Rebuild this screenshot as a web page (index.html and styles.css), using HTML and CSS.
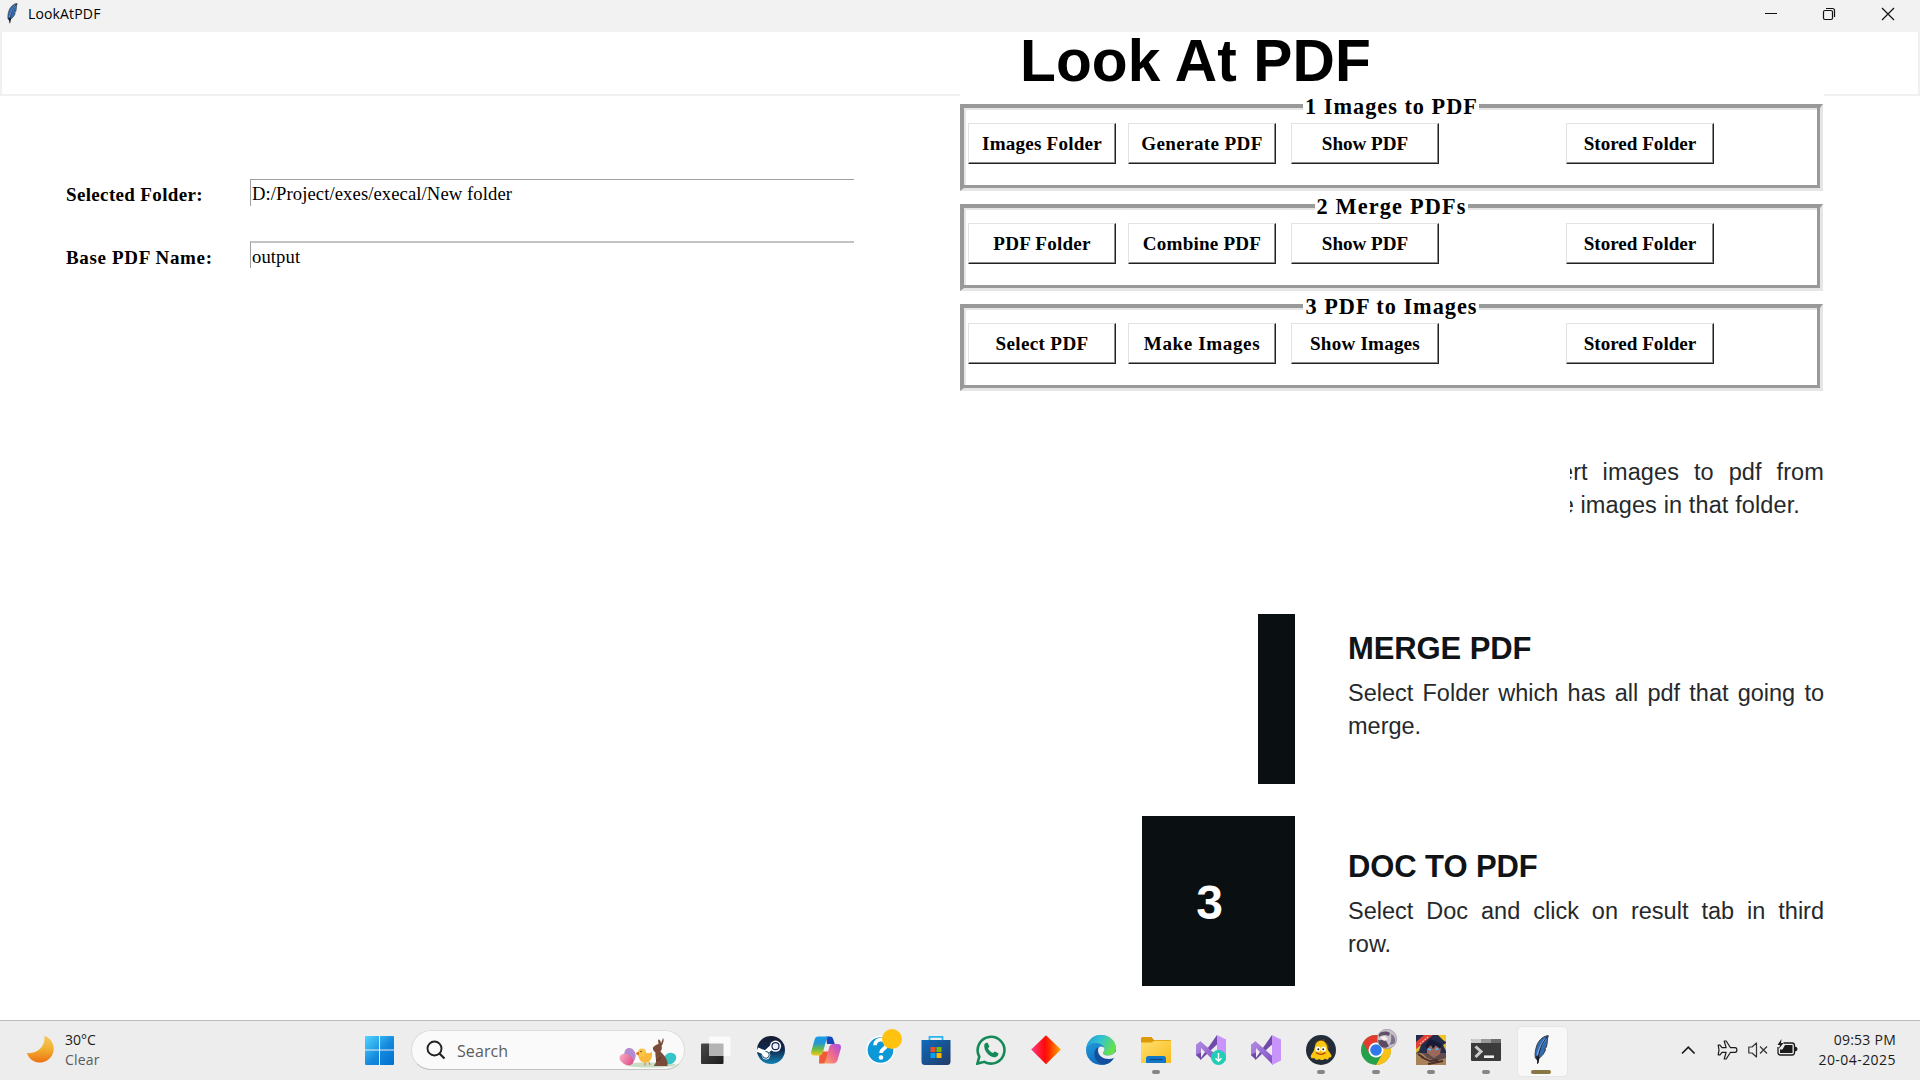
FILE: index.html
```html
<!DOCTYPE html>
<html lang="en">
<head>
<meta charset="utf-8">
<title>LookAtPDF</title>
<link rel="stylesheet" href="styles.css">
</head>
<body>
<svg width="0" height="0" class="defs" aria-hidden="true">
  <defs>
    <linearGradient id="gMoon" x1="0" y1="0" x2="0" y2="1"><stop offset="0" stop-color="#f8c860"/><stop offset=".5" stop-color="#f0b030"/><stop offset="1" stop-color="#ee7014"/></linearGradient>
    <linearGradient id="gWin" x1="0" y1="0" x2="1" y2="1"><stop offset="0" stop-color="#4fd6ff"/><stop offset=".55" stop-color="#1488dd"/><stop offset="1" stop-color="#0070d0"/></linearGradient>
    <linearGradient id="gSteam" x1="0" y1="0" x2="0" y2="1"><stop offset="0" stop-color="#171a2e"/><stop offset=".5" stop-color="#102a50"/><stop offset="1" stop-color="#1483b4"/></linearGradient>
    <linearGradient id="gCopA" x1="0" y1="0" x2="0" y2="1"><stop offset="0" stop-color="#1a9be8"/><stop offset=".35" stop-color="#2398d4"/><stop offset=".65" stop-color="#67bb48"/><stop offset="1" stop-color="#f0c818"/></linearGradient>
    <linearGradient id="gCopB" x1="1" y1="0" x2="0" y2="1"><stop offset="0" stop-color="#a44de8"/><stop offset=".5" stop-color="#ee6890"/><stop offset="1" stop-color="#ffa95c"/></linearGradient>
    <linearGradient id="gStore" x1="0" y1="0" x2="1" y2="1"><stop offset="0" stop-color="#0f6cbd"/><stop offset="1" stop-color="#233a66"/></linearGradient>
    <linearGradient id="gDia" x1="0" y1="0" x2="1" y2="0"><stop offset="0" stop-color="#ff3a86"/><stop offset=".45" stop-color="#ff0a0a"/><stop offset=".6" stop-color="#ff2a00"/><stop offset="1" stop-color="#ffa800"/></linearGradient>
    <linearGradient id="gEdgeA" x1="0" y1="0" x2="1" y2=".4"><stop offset="0" stop-color="#1a98dc"/><stop offset=".5" stop-color="#35c3d0"/><stop offset="1" stop-color="#66e04c"/></linearGradient>
    <linearGradient id="gEdgeB" x1="0" y1="0" x2=".6" y2="1"><stop offset="0" stop-color="#28a8e4"/><stop offset="1" stop-color="#0c62b8"/></linearGradient>
    <linearGradient id="gFold" x1="0" y1="0" x2="1" y2="1"><stop offset="0" stop-color="#ffdf70"/><stop offset="1" stop-color="#f9bc1c"/></linearGradient>
    <linearGradient id="gTask" x1="0" y1="0" x2="1" y2="1"><stop offset="0" stop-color="#4a4a4a"/><stop offset="1" stop-color="#1c1c1c"/></linearGradient>
    <linearGradient id="gVs" x1="0" y1="0" x2="1" y2="1"><stop offset="0" stop-color="#b58be6"/><stop offset="1" stop-color="#7a4fc0"/></linearGradient>
    <linearGradient id="gEgg" x1="0" y1="0" x2="0" y2="1"><stop offset="0" stop-color="#f7a9c4"/><stop offset="1" stop-color="#df4f88"/></linearGradient>
    <symbol id="feather" viewBox="0 0 16 30">
      <path d="M15.3.6C11 .8 6.200 4.500 4 10 2.300 14.500 1.700 19 2.300 23l1.600 1.500C8 22.500 11.500 18.500 12.600 14.500l-1.200-.1 1.900-2.200C14.700 8.500 14 4 15.300.6z" fill="#2f6cb4" stroke="#33363c" stroke-width=".9"/>
      <path d="M13 3.500C9 8 6.300 13 4.500 20" stroke="#79a5d8" stroke-width="2" fill="none"/>
      <path d="M14.500 1.500C9 8 5.500 15 4.500 29" stroke="#15171b" stroke-width=".9" fill="none"/>
      <path d="M2.800 21l2 7h.8l.9-6z" fill="#15171b"/>
    </symbol>
    <symbol id="vs" viewBox="0 0 30 30">
      <path d="M0 10l4.500-3.500v17L0 20z" fill="#5b3a8e"/>
      <path d="M4.500 23.500L21 0v9.500L4.500 25z" fill="#6f4aa8"/>
      <path d="M0 10l4.500-3.700L22 21.500V30L5 13 4 18.500 0 20z" fill="url(#gVs)"/>
      <path d="M0 20l5-2.500v7.500z" fill="#6f4aa8"/>
      <path d="M21 0l9 4.500v21L21 30z" fill="#c893fa"/>
    </symbol>
  </defs>
</svg>

<header class="titlebar">
  <svg class="app-icon" width="12" height="21"><use href="#feather"/></svg>
  <span class="app-name">LookAtPDF</span>
  <div class="controls">
    <svg width="14" height="14" viewBox="0 0 14 14"><path d="M2 6.500h12" stroke="#111"/></svg>
    <svg width="14" height="14" viewBox="0 0 14 14"><rect x="1.500" y="3.500" width="9" height="9" rx="1.500" fill="none" stroke="#111" stroke-width="1.200"/><path d="M4 1.500h6.500a2 2 0 0 1 2 2V10" fill="none" stroke="#111" stroke-width="1.200"/></svg>
    <svg width="14" height="14" viewBox="0 0 14 14"><path d="M1 1l12 12M13 1L1 13" stroke="#111" stroke-width="1.200"/></svg>
  </div>
</header>

<div class="banner"><h1>Look At PDF</h1></div>

<main class="workspace">
  <section class="form">
    <div class="field"><label>Selected Folder:</label><div class="entry">D:/Project/exes/execal/New folder</div></div>
    <div class="field"><label class="wide">Base PDF Name:</label><div class="entry soft">output</div></div>
  </section>

  <section class="panel">
    <div class="group">
      <div class="legend"><span>1 Images to PDF</span></div>
      <button>Images Folder</button><button class="wide">Generate PDF</button><button class="tight">Show PDF</button><button class="tight">Stored Folder</button>
    </div>
    <div class="group">
      <div class="legend"><span class="wide">2 Merge PDFs</span></div>
      <button>PDF Folder</button><button>Combine PDF</button><button class="tight">Show PDF</button><button class="tight">Stored Folder</button>
    </div>
    <div class="group">
      <div class="legend"><span>3 PDF to Images</span></div>
      <button class="wide">Select PDF</button><button class="wider">Make Images</button><button>Show Images</button><button class="tight">Stored Folder</button>
    </div>

    <div class="clip">
      <p class="spread">ert images to pdf from</p>
      <p class="short">e images in that folder.</p>
    </div>
    <div class="step">
      <div class="marker half"></div>
      <div class="copy">
        <h2>MERGE PDF</h2>
        <p class="full">Select Folder which has all pdf that going to</p>
        <p>merge.</p>
      </div>
    </div>
    <div class="step last">
      <div class="marker">3</div>
      <div class="copy">
        <h2>DOC TO PDF</h2>
        <p class="full">Select Doc and click on result tab in third</p>
        <p>row.</p>
      </div>
    </div>
  </section>
</main>

<footer class="taskbar">
  <div class="weather">
    <svg width="30" height="30" viewBox="0 0 30 30"><path d="M19 1.200A14.300 14.300 0 1 1 .8 19.200C12 20.500 20.500 12 19 1.200z" fill="url(#gMoon)"/></svg>
    <div><div class="temp">30°C</div><div class="sky">Clear</div></div>
  </div>
  <div class="cell"><svg width="29" height="30" viewBox="0 0 29 30"><path d="M1 1h13v13.500H0V2a1 1 0 0 1 1-1zM15 1h13a1 1 0 0 1 1 1v12.500H15zM0 15.500h14V30H1a1 1 0 0 1-1-1zM15 15.500h14V29a1 1 0 0 1-1 1H15z" fill="url(#gWin)"/></svg></div>

  <div class="search">
    <svg class="lens" width="20" height="20" viewBox="0 0 20 20"><circle cx="8.500" cy="8.500" r="7" fill="none" stroke="#222" stroke-width="1.900"/><path d="M13.500 13.500l5 5" stroke="#222" stroke-width="2.200"/></svg>
    <span>Search</span>
    <svg class="bunny" width="60" height="30" viewBox="0 0 60 30">
      <ellipse cx="33" cy="27" rx="25" ry="2.600" fill="#c9dcc6"/>
      <ellipse cx="12" cy="17" rx="5.600" ry="7.200" fill="#b48ad0" transform="rotate(-15 12 17)"/>
      <ellipse cx="8.500" cy="21.500" rx="5.200" ry="7.400" fill="url(#gEgg)" transform="rotate(-62 8.500 21.500)"/>
      <ellipse cx="52" cy="20.500" rx="5.500" ry="6.500" fill="#35c4c8" transform="rotate(55 52 20.500)"/>
      <path d="M20 16c2-4 6-5 8-1.500 2.500 1.500 4.500 0 5.800-.5 1 5-.8 9.500-5 10.500-5 .8-8-2-8.800-8.500z" fill="#f9b93c"/>
      <circle cx="24" cy="14.500" r="4" fill="#fbc548"/><path d="M20.500 14l-2.500 1.500 2.500 1.500zM27 24.500v3M31 24l1 3" stroke="#e07b1c" fill="#e07b1c"/><circle cx="23" cy="13.500" r=".7" fill="#333"/>
      <path d="M35 9.500c1.500-2 3.500-3 5.500-3.500L40 1.500c2 0 3 2 3 4L45 0c1.500 2 0 6-1.500 8 1 2 0 4-1 5.500C46 17 50.500 22 49.500 28H36c.5-2 2-2 2-5 0-4-1-6-.5-8.500C37 13.500 34.500 13 35 9.500z" fill="#7a4b39"/>
      <path d="M38 22c2 1 4 0 4.500-3" stroke="#553024" fill="none"/>
    </svg>
  </div>

  <div class="apps">
    <div class="cell"><svg width="30" height="30" viewBox="0 0 30 30"><rect x="0" y="8.500" width="22.500" height="20.500" rx="1" fill="url(#gTask)"/><rect x="8" y="1.500" width="21.500" height="19.500" rx="1" fill="#fafafa"/><path d="M8 8.500h14.500V21H8z" fill="#b4b4b4"/></svg></div>
    <div class="cell"><svg width="30" height="30" viewBox="0 0 30 30"><circle cx="15" cy="15" r="14" fill="url(#gSteam)"/><path d="M1.300 14.500l8 3.400 6-5.500" stroke="#fff" stroke-width="4.500" fill="none"/><circle cx="19.500" cy="11.200" r="5.600" fill="#fff"/><circle cx="19.500" cy="11.200" r="3.500" fill="#eef" stroke="#14284a" stroke-width="1.200"/><circle cx="10" cy="20.200" r="4.200" fill="#fff"/><path d="M6.500 20.500a3.400 3.400 0 1 0 3-4" fill="none" stroke="#15466c" stroke-width="1"/></svg></div>
    <div class="cell"><svg width="30" height="30" viewBox="0 0 30 30"><path d="M15 1.500h4c2 0 2.800 1.200 3.300 3L23.800 9H16z" fill="#1746b8"/><path d="M8 28.500h4c2 0 3-1 3.500-3l2.500-9H8.500z" fill="#f0593a"/><path d="M7 1.500h11c-2 1-2.500 2.500-3 4.500l-3 11c-.6 2.500-2 3.500-4 3.500H3.500c-3 0-4-2-3-5L3.500 5C4.100 2.700 5 1.500 7 1.500z" fill="url(#gCopA)"/><path d="M22 9h4.500c3 0 4 2 3.200 5l-3 10.500c-.8 2.500-2 4-4.700 4H12c2-1 2.500-2.500 3-4.500l3-11c.6-2.500 2-4 4-4z" fill="url(#gCopB)"/></svg></div>
    <div class="cell"><svg width="36" height="36" viewBox="0 0 36 36" class="help"><circle cx="14.500" cy="21" r="13.500" fill="#0d98d8" stroke="#fff" stroke-width="1.300"/><path d="M9 16.200c.2-7.500 11.500-7.300 11.500-.8 0 4.600-5.500 4.200-5.500 8.600" fill="none" stroke="#fff" stroke-width="3.700"/><circle cx="15" cy="28.500" r="2.300" fill="#fff"/><circle cx="26" cy="10" r="10" fill="#ffc20e"/></svg></div>
    <div class="cell"><svg width="30" height="30" viewBox="0 0 30 30"><path d="M8.500 6V1.800h13V6" fill="none" stroke="#27b6f0" stroke-width="1.700"/><path d="M.5 5h29v21.500a3.500 3.500 0 0 1-3.500 3.500H4a3.500 3.500 0 0 1-3.500-3.500z" fill="url(#gStore)"/><path d="M9.500 12h5v5h-5z" fill="#f25022"/><path d="M15.500 12h5v5h-5z" fill="#7fba00"/><path d="M9.500 18h5v5h-5z" fill="#00a4ef"/><path d="M15.500 18h5v5h-5z" fill="#ffb900"/></svg></div>
    <div class="cell"><svg width="30" height="30" viewBox="0 0 30 30"><path d="M1.400 28.600l1.900-7A13.400 13.400 0 1 1 8.400 26.800z" fill="none" stroke="#158a58" stroke-width="2.600"/><path d="M8.300 9.500c1-2 2.600-2.200 3.500-1.500l1.600 3.600-1.400 2c1.200 2.300 2.800 3.600 5 4.500l1.700-1.700 3.700 1.800c.3 2.500-2 4.200-4.500 4C12.500 21.500 7.500 15.500 8.300 9.500z" fill="#158a58"/></svg></div>
    <div class="cell"><svg width="30" height="30" viewBox="0 0 30 30"><path d="M15 .3L29.800 14.500 15 29.200.2 14.500z" fill="url(#gDia)"/></svg></div>
    <div class="cell"><svg width="30" height="30" viewBox="0 0 30 30"><circle cx="15" cy="15" r="15" fill="url(#gEdgeB)"/><path d="M.3 13C2 4.500 8 0 15 0c8.500 0 15 6 15 13 0 5-4 7.500-8.500 7.500-3 0-4.500-1.200-4.500-2.500 0-1 1.500-1.500 1.500-4C18.500 10.500 14 8 9.500 8 5 8 1.800 10 .3 13z" fill="url(#gEdgeA)"/><path d="M11.500 12.500C5 17 9.500 29.300 18 29.700c4-.4 8-3 9.500-6.300.3-.7-.3-.9-1-.5C19 26 13 20.500 13.300 16z" fill="#134f9c"/><path d="M15 11.500c2.500 0 3.500 1.300 3.500 2.700 0 1.800-1.500 2.800-1.500 3.800 0 1.300 1.500 2.500 4.500 2.500 3.500 0 6.500-1.500 8-4L30.500 18c-.5 2.500-1.500 4-2.700 5C21 26 12 22 12 15.500c0-2 1-4 3-4z" fill="#eee"/></svg></div>
    <div class="cell"><svg width="30" height="30" viewBox="0 0 30 30"><path d="M0 9V3.500A1.500 1.500 0 0 1 1.500 2h9l2.500 3h16a1 1 0 0 1 1 1v6z" fill="#dc9a08"/><path d="M0 7.500h10.500l3-1.700H30V28H0z" fill="url(#gFold)"/><path d="M5 28v-4.500A2.500 2.500 0 0 1 7.500 21h15a2.500 2.500 0 0 1 2.500 2.500V28z" fill="#1177c8"/><path d="M8.500 24.500h13" stroke="#0b4a82" stroke-width="1.200"/></svg><i></i></div>
    <div class="cell"><svg width="30" height="30" viewBox="0 0 30 30"><use href="#vs" width="30" height="30"/><circle cx="22.500" cy="22.500" r="7.500" fill="#22cdb6"/><path d="M22.500 18v8M19.500 23.200l3 3 3-3" stroke="#fff" stroke-width="1.400" fill="none"/></svg></div>
    <div class="cell"><svg width="30" height="30"><use href="#vs" width="30" height="30"/></svg></div>
    <div class="cell"><svg width="30" height="30" viewBox="0 0 30 30"><circle cx="15" cy="15" r="15" fill="#232d3a"/><path d="M9 8c3-4 5-2 9-4l1 3c3 1 4 4 4 7l-3-3H9z" fill="#71431f"/><path d="M9 11c2-7 10-7 12 0 .5 3 1 4.500 3 7 2.500 3 1.500 5-1 4.500-.5 2.500-3 2.500-4 1-1.500 2-4.500 2-6 .5-1.500 1.500-4 1-4.500-1C5 24 3.500 22 6 18.500 8 16 8.500 14 9 11z" fill="#fac810"/><circle cx="12" cy="14" r="2.600" fill="#fff"/><circle cx="17.500" cy="14" r="2.600" fill="#fff"/><circle cx="12.300" cy="14.200" r="1" fill="#222"/><circle cx="17.200" cy="14.200" r="1" fill="#222"/><path d="M10 17.500c3 2.300 7 2.300 9.500 0" stroke="#b94018" stroke-width="1.500" fill="none"/></svg><i></i></div>
    <div class="cell"><svg width="36" height="36" viewBox="0 0 36 36" class="chrome"><circle cx="15" cy="21" r="15" fill="#25a04b"/><path d="M2 13.500A15 15 0 0 1 28 13.500H15L8.500 24.700z" fill="#e53b2e"/><path d="M28 13.500A15 15 0 0 1 15 36l6.500-11.200L23 13.500z" fill="#fbc116"/><circle cx="15" cy="21" r="7.500" fill="#fff"/><circle cx="15" cy="21" r="5.800" fill="#3079ea"/><circle cx="26" cy="10" r="9.700" fill="#c9bfcb" stroke="#9d9aa2" stroke-width=".8"/><path d="M18 5c3-3 8-3 11-1l-1 3c-4-2-7-1-10 1z" fill="#5f5068"/><path d="M17 11c3 1 5-1 8 1l3 5c-3 3-8 2-10-2z" fill="#5b4a61"/><path d="M30 5c4 2 5 6 3.500 9.500l-5 1.500c2-4 2-7 1.500-11z" fill="#7d7186"/><path d="M19 8l5-1 3 3-4 2z" fill="#f4eeee"/></svg><i></i></div>
    <div class="cell"><svg width="30" height="30" viewBox="0 0 30 30"><path d="M0 0h30v30H0z" fill="#5f4a4c"/><path d="M0 0h30v18H0z" fill="#252b4a"/><path d="M22 0h8v7l-3-2z" fill="#f0c522"/><path d="M0 13l5-3-2 6-3 2zM27 10l3-2v8z" fill="#d9bc31"/><path d="M11 11l7-1 7 3-1 6-6 4-7-5z" fill="#9b685a"/><path d="M9 11l5-7 12 5-2 5-4-4-3 4-2-4-4 4z" fill="#171b35"/><path d="M12 14l3 1M19.500 14.500l3-1" stroke="#58b9ff" stroke-width="1.800"/><path d="M0 19c4-3 8 0 11 4l9 3 10-3v7H0z" fill="#a98258"/><path d="M5 22l9 4 8-1M2 19l6 4M12 29l15-3" stroke="#4a2f2a" stroke-width="1.800" fill="none"/><path d="M8 0h9L0 14V7z" fill="#e03f34"/><path d="M4 9l8-7" stroke="#f5b1a5" stroke-width="1.300" stroke-dasharray="2 1"/></svg><i></i></div>
    <div class="cell"><svg width="30" height="30" viewBox="0 0 30 30"><path d="M0 5a1 1 0 0 1 1-1h28a1 1 0 0 1 1 1v20a1 1 0 0 1-1 1H1a1 1 0 0 1-1-1z" fill="#3b3b3b"/><path d="M0 5a1 1 0 0 1 1-1h9v4H0z" fill="#ccc"/><path d="M10 4h10v4H10z" fill="#999"/><path d="M20 4h9a1 1 0 0 1 1 1v3H20z" fill="#6c6c6c"/><path d="M4.500 11.500l5.500 5-5.500 5.500" fill="none" stroke="#ccc" stroke-width="3"/><path d="M13 21.700h10" stroke="#eee" stroke-width="2.600"/></svg><i></i></div>
    <div class="cell active"><svg width="16" height="30"><use href="#feather"/></svg><i></i></div>
  </div>

  <div class="tray">
    <svg class="chev" width="15" height="10" viewBox="0 0 15 10"><path d="M1 8.500l6.300-6.300 6.300 6.300" fill="none" stroke="#1b1b1b" stroke-width="1.700"/></svg>
    <svg class="plane" width="21" height="20" viewBox="0 0 21 20"><path d="M7.200 1h2l4.300 6.700H18c2.500 0 2.500 4.600 0 4.600h-4.500L9.200 19h-2l1.900-6.700H5L3 14.800H1.200L2 10l-.8-4.800H3l2 2.500h4.100z" fill="none" stroke="#1b1b1b" stroke-width="1.200" stroke-linejoin="round"/></svg>
    <svg class="speaker" width="20" height="16" viewBox="0 0 20 16"><path d="M8.500 1v14L4 11H.8V5H4z" fill="none" stroke="#333" stroke-width="1.200" stroke-linejoin="round"/><path d="M12 4.500l7 7M19 4.500l-7 7" stroke="#333" stroke-width="1.200"/></svg>
    <svg class="battery" width="21" height="17" viewBox="0 0 21 17"><path d="M6.500 4H15a2.500 2.500 0 0 1 2.500 2.500v7A2.500 2.500 0 0 1 15 16H3.500A2.500 2.500 0 0 1 1 13.500V8" fill="none" stroke="#1b1b1b" stroke-width="1.300"/><path d="M8 6h7.500v8H3V10.500h2.500z" fill="#1b1b1b"/><path d="M18.500 8c2 0 2 4 0 4z" fill="#1b1b1b" stroke="#1b1b1b"/><path d="M4.500 0L.5 6H3L1.800 10 6.500 4H4z" fill="#1b1b1b"/></svg>
    <div class="clock"><div class="time">09:53 PM</div><div class="date">20-04-2025</div></div>
  </div>
</footer>
</body>
</html>
```
FILE: styles.css
```css
* { box-sizing: border-box; }
body {
  margin: 0;
  width: 1920px;
  height: 1080px;
  overflow: hidden;
  display: flex;
  flex-direction: column;
  background: #fff;
  color: #000;
  font-family: "Liberation Serif", serif;
}
h1, h2, p { margin: 0; }
svg { display: block; flex: none; }
.defs { position: absolute; }

/* Window title bar */
.titlebar {
  height: 31px;
  flex: none;
  display: flex;
  align-items: flex-start;
  padding: 3px 25px 0 6px;
  background: #f2f2f2;
  font-family: "Open Sans", sans-serif;
}
.app-name {
  margin-left: 10px;
  font-size: 14px;
  line-height: 22px;
  letter-spacing: .15px;
}
.controls {
  margin: 4px 0 0 auto;
  display: flex;
  gap: 45px;
}

.banner {
  height: 65px;
  flex: none;
  border: 2px solid #f0f0f0;
  border-top-width: 1px;
  padding-left: 1018px;
}
.banner h1 {
  font: bold 58.67px/57px "Liberation Sans", sans-serif;
  letter-spacing: .1px;
}

.workspace {
  flex: 1;
  min-height: 0;
  display: flex;
}

/* Form on the left */
.form {
  width: 960px;
  padding: 83px 0 0 66px;
  display: flex;
  flex-direction: column;
  gap: 35px;
}
.field {
  display: flex;
  height: 27px;
}
.field label {
  width: 184px;
  padding-top: 2px;
  font-size: 19px;
  font-weight: bold;
  line-height: 27px;
  letter-spacing: .35px;
}
.field label.wide { padding-top: 3px; letter-spacing: .65px; }
.entry {
  width: 604px;
  height: 27px;
  padding-left: 1px;
  border-top: 1px solid #a0a0a0;
  border-left: 1px solid #a0a0a0;
  font-size: 18.67px;
  line-height: 28px;
  letter-spacing: .08px;
}
.entry.soft { border-top: 2px solid #c3c3c3; }

/* Panel on the right; covers part of the banner's lower edge */
.panel {
  width: 864px;
  margin-top: -2px;
  padding-top: 10px;
  background: #fff;
}
.group {
  position: relative;
  height: 87px;
  margin: 0 1px 13px 0;
  padding: 15px 0 0 4px;
  display: grid;
  grid-template-columns: 160px 163px 275px 148px;
  align-items: start;
  border-style: solid;
  border-width: 4px 3px 3px 4px;
  border-color: #999 #e6e6e6 #e6e6e6 #999;
  box-shadow: inset -3px -3px #999, inset 2px 2px #e6e6e6;
}
.legend {
  position: absolute;
  top: -14px;
  left: 0;
  right: 2px;
  display: flex;
  justify-content: center;
}
.legend span {
  padding: 0 1px 0 2px;
  background: #fff;
  font-size: 22.3px;
  font-weight: bold;
  line-height: 25px;
  letter-spacing: 1px;
}
.legend .wide { letter-spacing: 1.15px; }
button {
  width: 148px;
  height: 41px;
  padding: 0;
  background: #fff;
  border: 1px solid;
  border-color: #e3e3e3 #222 #222 #e3e3e3;
  box-shadow: inset -1px -1px #8c8c8c;
  color: #000;
  font: bold 19.1px/39px "Liberation Serif", serif;
  letter-spacing: .2px;
}
button.tight { letter-spacing: 0; }
button.wide { letter-spacing: .35px; }
button.wider { letter-spacing: .6px; }

/* Instructions */
.clip, .step { font-family: "Liberation Sans", sans-serif; color: #26292b; }
.clip p, .copy p { font-size: 23.5px; line-height: 33px; white-space: nowrap; }
.clip {
  width: 254px;
  height: 66px;
  margin: 65px 0 92px 610px;
  overflow: hidden;
}
.clip p { display: flex; justify-content: flex-end; letter-spacing: .12px; }
.clip .spread { word-spacing: 8.2px; }
.clip .short { padding-right: 24px; }
.step {
  height: 170px;
  margin: 0 0 32px 182px;
  display: flex;
}
.marker {
  width: 153px;
  margin-right: 53px;
  background: #0a0f11;
  color: #fff;
  font-size: 48px;
  font-weight: bold;
  line-height: 174px;
  text-align: center;
  padding-right: 18px;
}
.marker.half { width: 37px; margin-left: 116px; }
.copy { width: 476px; padding-top: 17px; }
.step.last .copy { padding-top: 33px; }
.copy h2 {
  margin-bottom: 10px;
  font-size: 31px;
  line-height: 36px;
  letter-spacing: -.1px;
  color: #111416;
}
.copy .full { text-align: justify; text-align-last: justify; white-space: normal; }

/* Taskbar */
.taskbar {
  height: 60px;
  flex: none;
  display: flex;
  border-top: 1px solid #bcbcbc;
  background: #ededed;
  font-family: "Open Sans", sans-serif;
  font-size: 14px;
  color: #1b1b1b;
}
.weather {
  width: 352px;
  padding: 9px 0 0 26px;
  display: flex;
  line-height: 20px;
}
.weather svg { margin: 4px 10px 0 0; width: 29px; }
.sky { color: #5a5a5a; letter-spacing: .2px; }
.cell {
  position: relative;
  width: 55px;
  padding-top: 14px;
  display: flex;
  flex-direction: column;
  align-items: center;
}
.cell i {
  width: 8px;
  height: 4px;
  margin-top: 5px;
  border-radius: 2px;
  background: #868686;
}
.cell .help, .cell .chrome { margin: -6px 0 0 6px; }
.active::before {
  content: "";
  position: absolute;
  left: 3px;
  top: 5px;
  width: 49px;
  height: 49px;
  border-radius: 5px;
  background: #f8f8f8;
  border: 1px solid #e6e6e6;
}
.active svg, .active i { position: relative; }
.active i { width: 20px; background: #8a7640; }
.search {
  width: 274px;
  height: 40px;
  margin: 9px 3.500px 0 4px;
  padding-left: 14px;
  display: flex;
  align-items: center;
  border: 1px solid #dcdcdc;
  border-bottom-color: #c4c4c4;
  border-radius: 20px;
  background: #fafafa;
  color: #5c5c5c;
  font-size: 16px;
  letter-spacing: .1px;
}
.search span { margin-left: 11px; padding-top: 1px; }
.search .bunny { margin: 6px 6px 0 auto; }
.apps { display: flex; }
.tray {
  margin-left: auto;
  padding: 9px 24px 0 0;
  display: flex;
}
.chev { margin: 15px 21px 0 0; }
.plane { margin: 10px 10px 0 0; }
.speaker { margin: 12px 9px 0 0; }
.battery { margin: 9px 20px 0 0; }
.clock { line-height: 20px; text-align: right; white-space: nowrap; }
.time { letter-spacing: .25px; }
.date { letter-spacing: .45px; }
```
